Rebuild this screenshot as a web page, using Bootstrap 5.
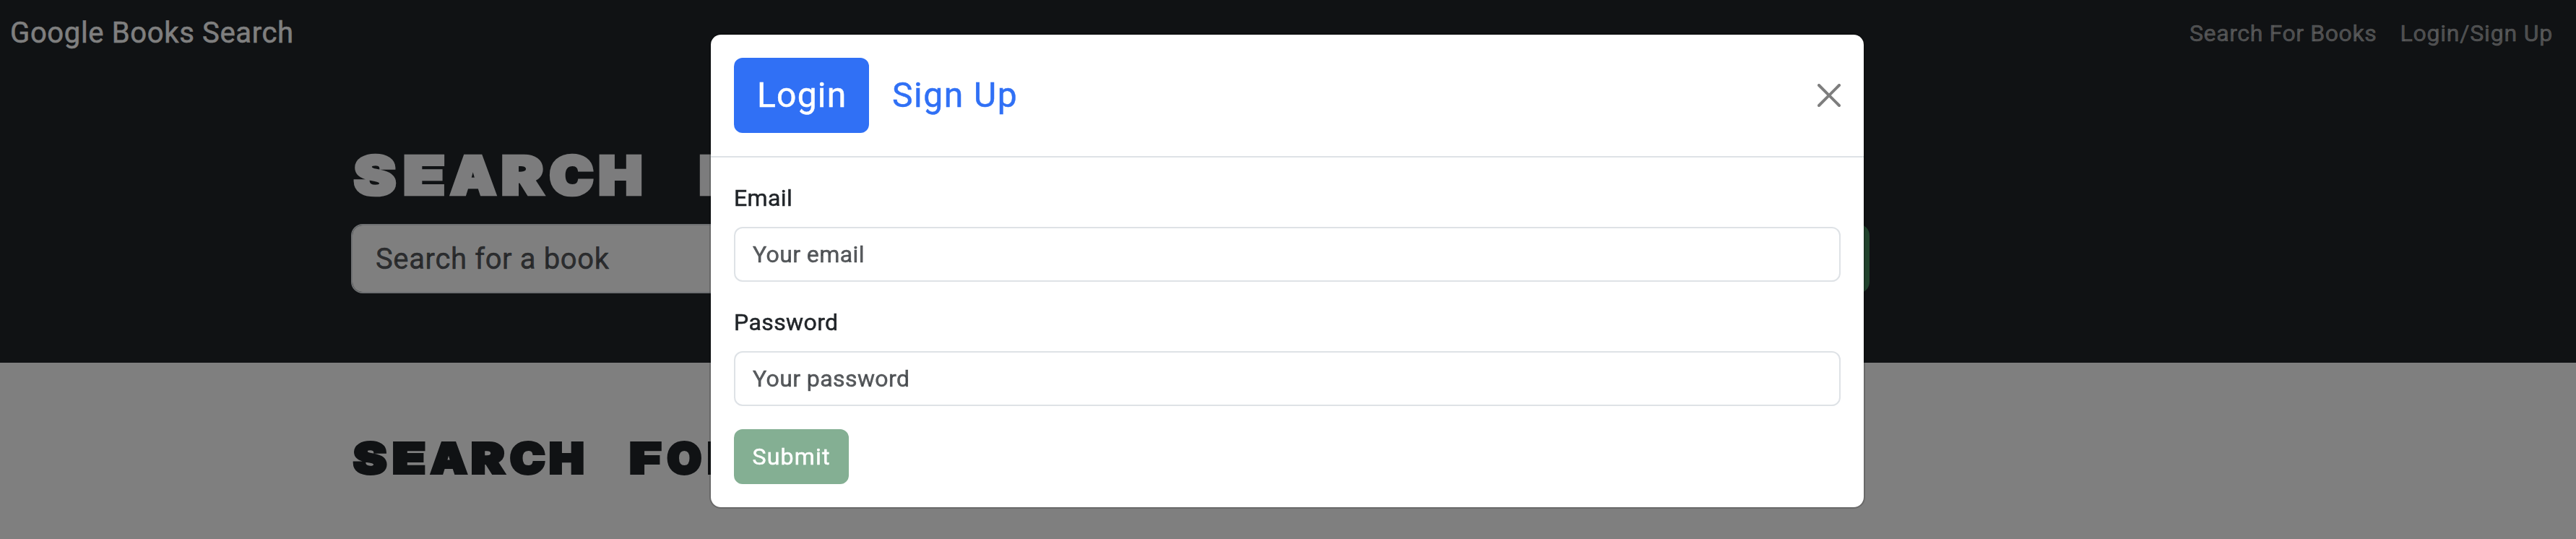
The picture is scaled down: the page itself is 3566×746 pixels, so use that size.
<!DOCTYPE html>
<html lang="en">
<head>
<meta charset="utf-8">
<meta name="viewport" content="width=device-width, initial-scale=1">
<title>Google Books Search</title>
<link href="https://cdn.jsdelivr.net/npm/bootstrap@5.3.0/dist/css/bootstrap.min.css" rel="stylesheet">
<style>
  html { font-size: 32px; overflow: hidden; }
  body {
    --bs-border-width: 2px;
    font-family: Roboto, "Liberation Sans", sans-serif;
    -webkit-text-stroke: .5px;
    overflow: hidden;
  }
  .page { padding-right: 2px; }
  .topbar { padding: 0 14px 10px; height: 102px; --bs-navbar-nav-link-padding-x: .5rem; }
  .topbar .navbar-brand { font-size: 40px; letter-spacing: .65px; padding: 0; margin-top: -1px; }
  .topbar .nav-link { letter-spacing: .6px; }
  .topbar .nav-link.login { letter-spacing: .8px; }
  .wide { width: 2640px; max-width: 2640px; padding: 0 24px; }
  .search-row { --bs-gutter-x: 48px; }
  .search-row .form-control, .search-row .btn {
    font-size: 40px; height: 96px; border-radius: .5rem; border-width: 2px;
  }
  .search-row .form-control { padding: 0 32px; letter-spacing: .62px; }
  .search-row .btn { width: 342px; padding: 0; }
  .btn-success { --bs-btn-bg: #428459; --bs-btn-border-color: #428459; --bs-btn-disabled-bg: #428459; --bs-btn-disabled-border-color: #428459; }

  .block-title { font-family: Inter, sans-serif; font-weight: 900; -webkit-text-stroke: .065em; white-space: nowrap; }
  h1.block-title { font-size: 73px; line-height: 90px; padding-bottom: 6px; margin-left: -1px; }
  h2.block-title { font-size: 58.4px; line-height: 71px; margin-left: -1px; }
  .block-title span { display: inline-block; width: .9315em; text-align: center; white-space: pre; }
  .block-title .w-s, .block-title .w-r { transform: scaleX(1.19); }
  .block-title .w-e, .block-title .w-f { transform: scaleX(1.29); }
  .block-title .w-a { transform: scaleX(1.08); }
  .block-title .w-c, .block-title .w-h { transform: scaleX(1.11); }
  .block-title .w-o { transform: scaleX(1.05); }

  .modal { overflow: hidden; padding-right: 2px; }
  .modal-dialog { max-width: 1600px; width: 1600px; margin: 46px auto 0; }
  .modal-content { --bs-modal-border-width: 2px; --bs-modal-border-radius: .5rem; border-radius: .5rem; }
  .modal-header { padding: 32px; border-bottom-width: 2px; border-radius: 14px 14px 0 0; }
  .modal-header .nav-link { font-size: 48px; line-height: 72px; padding: 16px 32px; letter-spacing: 1.5px; color: #3070f5; }
  .modal-header .nav-link.active { background: #3070f5; color: #fff; width: 187px; letter-spacing: 1.2px; white-space: nowrap; }
  .modal-header .btn-close { width: 32px; height: 32px; padding: 16px; box-sizing: content-box; margin: 0 -16px 0 auto; }
  .modal-body { padding: 32px; }
  .modal-body .form-label { margin-bottom: 16px; display: block; line-height: 48px; letter-spacing: .4px; }
  .modal-body .form-control { height: 76px; border-radius: 12px; letter-spacing: .4px; border-width: 2px; }
  .modal-body .btn { height: 76px; width: 159px; padding: 0; letter-spacing: 1.2px; border-radius: 12px; border-width: 2px; }
  .modal-body .btn:disabled { opacity: 1; --bs-btn-disabled-bg: #84af93; --bs-btn-disabled-border-color: #84af93; }
  .form-control::placeholder { color: rgba(33,37,41,.75); }
</style>
</head>
<body>
<div class="page bg-dark">
  <nav class="navbar navbar-expand navbar-dark topbar d-flex justify-content-between">
    <a class="navbar-brand text-white" href="#">Google Books Search</a>
    <div class="navbar-nav">
      <a class="nav-link" href="#">Search For Books</a>
      <a class="nav-link login" href="#">Login/Sign Up</a>
    </div>
  </nav>
  <header class="text-light py-5">
    <div class="container wide">
      <h1 class="block-title mb-2">SEARCH F</h1>
      <form class="row search-row">
        <div class="col-8"><input type="text" class="form-control form-control-lg" placeholder="Search for a book"></div>
        <div class="col-4"><button type="button" class="btn btn-success btn-lg"></button></div>
      </form>
    </div>
  </header>
</div>
<main class="page">
  <div class="container wide">
    <h2 class="block-title pt-5">SEARCH FOR</h2>
  </div>
</main>

<div class="modal-backdrop show"></div>
<div class="modal show d-block" tabindex="-1" role="dialog" aria-modal="true">
  <div class="modal-dialog">
    <div class="modal-content">
      <div class="modal-header">
        <div class="nav nav-pills">
          <a class="nav-link active" href="#">Login</a>
          <a class="nav-link" href="#">Sign Up</a>
        </div>
        <button type="button" class="btn-close" aria-label="Close"></button>
      </div>
      <div class="modal-body">
        <form>
          <div class="mb-3">
            <label class="form-label" for="email">Email</label>
            <input type="text" id="email" class="form-control" placeholder="Your email">
          </div>
          <div class="mb-3">
            <label class="form-label" for="password">Password</label>
            <input type="password" id="password" class="form-control" placeholder="Your password">
          </div>
          <button type="submit" class="btn btn-success d-block" disabled>Submit</button>
        </form>
      </div>
    </div>
  </div>
</div>

<script src="https://cdn.jsdelivr.net/npm/bootstrap@5.3.0/dist/js/bootstrap.bundle.min.js"></script>
<script>
  // Set the block titles on a fixed-width letter grid
  document.querySelectorAll('.block-title').forEach(function (title) {
    var letters = Array.from(title.textContent);
    title.textContent = '';
    letters.forEach(function (ch) {
      var cell = document.createElement('span');
      cell.textContent = ch;
      if (/[A-Z]/.test(ch)) cell.className = 'w-' + ch.toLowerCase();
      title.appendChild(cell);
    });
  });
</script>
</body>
</html>
